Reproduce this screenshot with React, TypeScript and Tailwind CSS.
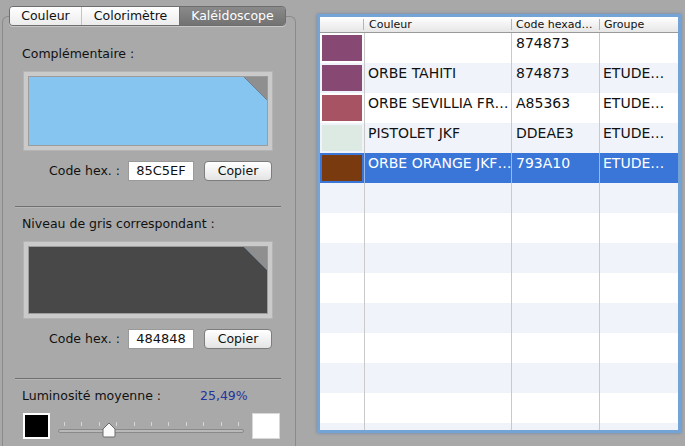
import React from 'react';

const rows = [
  { color: '#874873', name: '', hex: '874873', group: '' },
  { color: '#874873', name: 'ORBE TAHITI', hex: '874873', group: 'ETUDE…' },
  { color: '#A85363', name: 'ORBE SEVILLIA FR…', hex: 'A85363', group: 'ETUDE…' },
  { color: '#DDEAE3', name: 'PISTOLET JKF', hex: 'DDEAE3', group: 'ETUDE…' },
  { color: '#793A10', name: 'ORBE ORANGE JKF…', hex: '793A10', group: 'ETUDE…', selected: true },
];

function ColorWell({ color, height }: { color: string; height: string }) {
  return (
    <div className={`ml-[20px] w-[250px] ${height} border border-[#b4b4b4] bg-[#cacaca] p-[4px]`}>
      <div className="relative h-full w-full overflow-hidden border border-[#9c9c9c]" style={{ backgroundColor: color }}>
        <svg className="absolute right-0 top-0" width="23" height="23" viewBox="0 0 23 23">
          <polygon points="0,0 23,0 23,23" fill="#8f8f8f" />
          <line x1="0" y1="0" x2="23" y2="23" stroke="#6f7f8f" strokeWidth="1" />
        </svg>
      </div>
    </div>
  );
}

function HexRow({ value, className }: { value: string; className: string }) {
  return (
    <div className={`flex h-[20px] items-center ${className}`}>
      <div className="w-[117px] text-right">Code hex. :</div>
      <div className="ml-[8px] flex h-[20px] w-[66px] items-center justify-center border border-[#9a9a9a] bg-white text-[13px]">
        {value}
      </div>
      <button className="ml-[10px] h-[20px] w-[68px] rounded-[4px] border border-[#7d7d7d] bg-gradient-to-b from-white to-[#e4e4e4] leading-none text-[#111]">
        Copier
      </button>
    </div>
  );
}

function Separator({ className }: { className: string }) {
  return <div className={`ml-[12px] w-[266px] border-t border-b border-t-[#6f6f6f] border-b-[#b6b6b6] ${className}`} />;
}

function Slider() {
  const ticks = Array.from({ length: 11 }, (_, i) => i);
  return (
    <div className="relative ml-[8px] h-[26px] w-[188px]">
      <div className="absolute left-[6px] top-[9px] flex w-[175px] justify-between">
        {ticks.map((t) => (
          <div key={t} className="h-[4px] w-px bg-[#d6d6d6]" />
        ))}
      </div>
      <div className="absolute left-0 top-[16px] h-[4px] w-[186px] rounded-full border border-[#8a8a8a] bg-[#b9b9b9]" />
      <svg className="absolute left-[43px] top-[9px]" width="16" height="16" viewBox="0 0 16 16">
        <path d="M8 1 L14 7 L14 14 Q14 15 13 15 L3 15 Q2 15 2 14 L2 7 Z" fill="#fafafa" stroke="#6a6a6a" strokeWidth="1" />
      </svg>
    </div>
  );
}

export default function App() {
  return (
    <div className="flex h-[446px] w-[685px] overflow-hidden bg-[#a8a8a8] font-['DejaVu_Sans',sans-serif] text-[12.5px] text-[#111]">
      {/* left inspector */}
      <div className="flex w-[297px] flex-col">
        <div className="relative z-10 ml-[9px] mt-[6px] flex h-[20px] w-[277px] overflow-hidden rounded-[4px] border border-[#6e6e6e] shadow-[0_1px_0_rgba(255,255,255,0.35)]">
          <div className="flex w-[72px] items-center justify-center border-r border-[#c4c4c4] bg-gradient-to-b from-white to-[#ececec]">
            Couleur
          </div>
          <div className="flex w-[97px] items-center justify-center bg-gradient-to-b from-white to-[#ececec]">
            Colorimètre
          </div>
          <div className="flex flex-1 items-center justify-center border-l border-[#6e6e6e] bg-gradient-to-b from-[#8a8a8a] to-[#727272] text-white">
            Kaléidoscope
          </div>
        </div>
        <div className="ml-[2px] mt-[-10px] w-[294px] flex-1 rounded-t-[6px] border border-b-0 border-[#8b8b8b] bg-[#a9a9a9] pt-[29px]">
          <div className="ml-[19px] h-[16px] leading-[16px]">Complémentaire :</div>
          <div className="mt-[9px]">
            <ColorWell color="#85C5EF" height="h-[80px]" />
          </div>
          <HexRow value="85C5EF" className="mt-[10px]" />
          <Separator className="mt-[25px]" />
          <div className="ml-[19px] mt-[8px] h-[16px] leading-[16px]">Niveau de gris correspondant :</div>
          <div className="mt-[9px]">
            <ColorWell color="#484848" height="h-[78px]" />
          </div>
          <HexRow value="484848" className="mt-[10px]" />
          <Separator className="mt-[29px]" />
          <div className="mt-[8px] flex h-[16px] items-center leading-[16px]">
            <div className="ml-[19px] w-[178px]">Luminosité moyenne :</div>
            <div className="text-[#24339c]">25,49%</div>
          </div>
          <div className="mt-[9px] flex items-start">
            <div className="ml-[20px] h-[26px] w-[27px] border-[2px] border-white bg-black" />
            <Slider />
            <div className="ml-[6px] h-[26px] w-[28px] border border-[#d8d8d8] bg-white" />
          </div>
        </div>
      </div>

      {/* color table */}
      <div className="ml-[20px] mt-[14px] h-[419px] w-[364px] overflow-hidden border-[3px] border-[#74a3d5] bg-white shadow-[0_0_3px_rgba(60,110,170,0.6)]">
        <div className="flex h-[16px] border-b border-[#9a9a9a] bg-gradient-to-b from-white to-[#e6e6e6] text-[11px] leading-[15px]">
          <div className="w-[45px] py-[2px]">
            <div className="ml-[43px] h-[11px] w-px bg-[#b5b5b5]" />
          </div>
          <div className="flex w-[147px] items-center justify-between pl-[4px]">
            <span>Couleur</span>
            <div className="h-[11px] w-px bg-[#b5b5b5]" />
          </div>
          <div className="flex w-[88px] items-center justify-between pl-[4px]">
            <span>Code hexad…</span>
            <div className="h-[11px] w-px bg-[#b5b5b5]" />
          </div>
          <div className="flex-1 pl-[4px]">Groupe</div>
        </div>
        {Array.from({ length: 14 }, (_, i) => {
          const r = rows[i];
          const bg = r?.selected ? 'bg-[#3a76d8] text-white' : i % 2 === 0 ? 'bg-white' : 'bg-[#f0f4fa]';
          const line = r?.selected ? 'border-[#9ab8ea]' : 'border-[#c9c9c9]';
          return (
            <div key={i} className={`flex h-[30px] text-[14px] leading-[17px] ${bg}`}>
              <div className={`w-[45px] border-r ${line} py-[2px] pl-[2px]`}>
                {r && <div className="h-[26px] w-[40px]" style={{ backgroundColor: r.color }} />}
              </div>
              <div className={`w-[147px] overflow-hidden whitespace-nowrap border-r ${line} pl-[3px] pt-[2px]`}>{r?.name}</div>
              <div className={`w-[88px] overflow-hidden whitespace-nowrap border-r ${line} pl-[4px] pt-[2px]`}>{r?.hex}</div>
              <div className="flex-1 overflow-hidden whitespace-nowrap pl-[3px] pt-[2px]">{r?.group}</div>
            </div>
          );
        })}
      </div>
    </div>
  );
}
